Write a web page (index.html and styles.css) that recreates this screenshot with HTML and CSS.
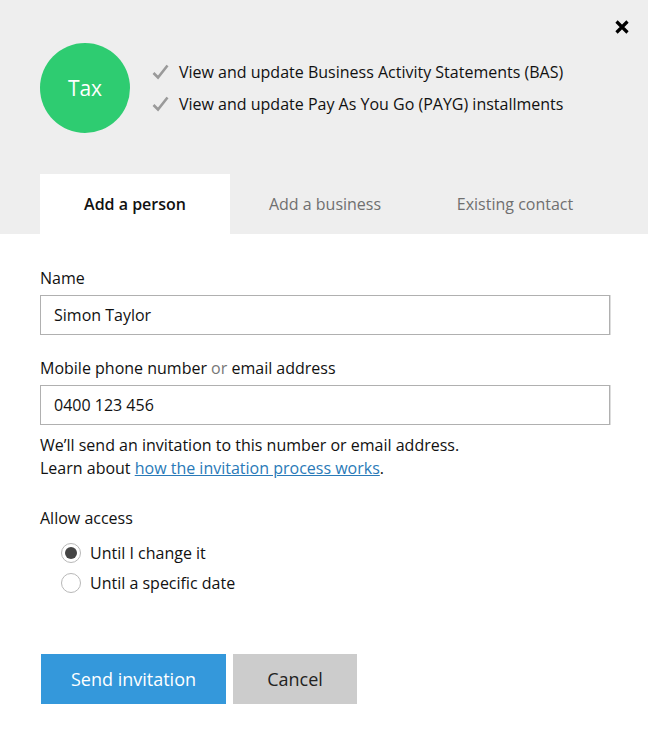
FILE: index.html
```html
<!DOCTYPE html>
<html>
<head>
<meta charset="utf-8">
<link rel="stylesheet" href="styles.css">
</head>
<body>
<div class="dialog">
  <header class="head">
    <button class="close" aria-label="Close">
      <svg width="14" height="14" viewBox="0 0 14 14"><path d="M1.5 1.5 L12.5 12.5 M12.5 1.5 L1.5 12.5" stroke="#000" stroke-width="3.2" stroke-linecap="butt"/></svg>
    </button>
    <div class="summary">
      <div class="badge">Tax</div>
      <ul class="perms">
        <li><svg class="tick" width="17" height="16" viewBox="0 0 17 16"><path d="M1.5 9 L6 13.5 L15.5 1.5" fill="none" stroke="#9a9a9a" stroke-width="2.6"/></svg>View and update Business Activity Statements (BAS)</li>
        <li><svg class="tick" width="17" height="16" viewBox="0 0 17 16"><path d="M1.5 9 L6 13.5 L15.5 1.5" fill="none" stroke="#9a9a9a" stroke-width="2.6"/></svg>View and update Pay As You Go (PAYG) installments</li>
      </ul>
    </div>
    <nav class="tabs">
      <div class="tab active">Add a person</div>
      <div class="tab">Add a business</div>
      <div class="tab">Existing contact</div>
    </nav>
  </header>
  <form class="form">
    <label class="label">Name</label>
    <div class="input">Simon Taylor</div>
    <label class="label label-gap">Mobile phone number <span class="muted">or</span> email address</label>
    <div class="input">0400 123 456</div>
    <p class="help">We’ll send an invitation to this number or email address.<br>Learn about <a href="#">how the invitation process works</a>.</p>
    <div class="label access">Allow access</div>
    <div class="radios">
      <div class="radio"><span class="dot checked"></span>Until I change it</div>
      <div class="radio"><span class="dot"></span>Until a specific date</div>
    </div>
    <div class="actions">
      <button type="button" class="btn primary">Send invitation</button>
      <button type="button" class="btn secondary">Cancel</button>
    </div>
  </form>
</div>
</body>
</html>
```
FILE: styles.css
```css
* { box-sizing: border-box; }
html, body { margin: 0; padding: 0; background: #fff; }
body { font-family: "Open Sans", "Noto Sans", sans-serif; color: #111; font-size: 16px; }
.dialog { width: 648px; }
.head { position: relative; background: #eeeeee; height: 234px; padding-top: 43px; }
.close { position: absolute; top: 20px; left: 615px; width: 14px; height: 14px; padding: 0; border: 0; background: none; display: block; }
.close svg { display: block; }
.summary { display: flex; align-items: center; padding-left: 40px; }
.badge { width: 90px; height: 90px; border-radius: 50%; background: #2ecc71; color: #fff; font-size: 21px; display: flex; align-items: center; justify-content: center; }
.perms { list-style: none; margin: 0 0 0 22px; padding: 0; }
.perms li { line-height: 32px; display: flex; align-items: center; font-size: 16px; color: #111; }
.tick { margin-right: 10px; flex: none; }
.tabs { display: flex; margin: 41px 0 0 40px; width: 570px; }
.tab { width: 190px; height: 60px; display: flex; align-items: center; justify-content: center; color: #707070; font-size: 16px; }
.tab.active { background: #fff; color: #111; font-weight: 600; }
.form { padding: 33px 0 0 40px; width: 610px; }
.label { display: block; line-height: 22px; font-size: 16px; }
.label-gap { margin-top: 22px; }
.muted { color: #777; }
.input { margin-top: 6px; height: 40px; border: 1px solid #b0b0b0; box-shadow: 1px 0 0 #ddd; padding: 0 13px; display: flex; align-items: center; font-size: 16px; }
.help { margin: 9px 0 0; line-height: 23px; font-size: 16px; }
.help a { color: #2a7ab8; text-decoration: underline; }
.access { margin-top: 27px; }
.radios { margin-top: 9px; padding-left: 21px; }
.radio { display: flex; align-items: center; line-height: 30px; font-size: 16px; }
.dot { width: 20px; height: 20px; border-radius: 50%; border: 1px solid #b8b8b8; margin-right: 9px; background: #fff; display: flex; align-items: center; justify-content: center; }
.dot.checked::after { content: ""; width: 12px; height: 12px; border-radius: 50%; background: #444; }
.actions { margin-top: 56px; display: flex; gap: 7px; padding-left: 1px; }
.btn { height: 50px; border: 0; font-family: inherit; font-size: 18px; padding: 0; box-shadow: 0 1px 0 #d0d0d0; }
.primary { width: 185px; background: #3498db; color: #fff; }
.secondary { width: 124px; background: #cccccc; color: #222; }
```
